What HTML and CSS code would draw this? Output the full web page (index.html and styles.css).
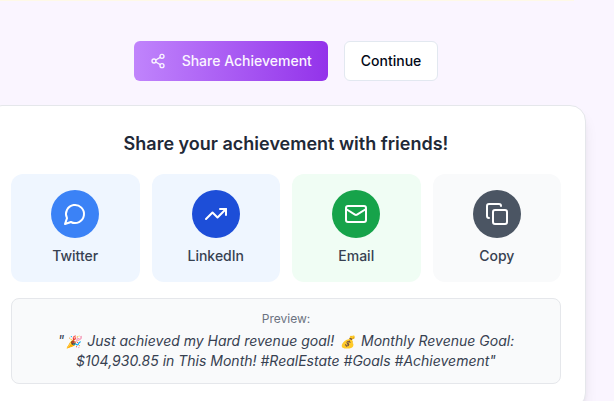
FILE: index.html
```html
<!DOCTYPE html>
<html lang="en">
<head>
<meta charset="utf-8">
<title>Share Achievement</title>
<link rel="stylesheet" href="styles.css">
</head>
<body>
<main class="page">
  <div class="banner-edge"></div>
  <div class="actions">
    <button class="btn btn-primary" type="button">
      <svg class="icon-sm" viewBox="0 0 24 24" aria-hidden="true"><circle cx="18" cy="5" r="3"/><circle cx="6" cy="12" r="3"/><circle cx="18" cy="19" r="3"/><path d="M8.59 13.51l6.83 3.98M15.41 6.51l-6.82 3.98"/></svg>
      <span>Share Achievement</span>
    </button>
    <button class="btn btn-outline" type="button">Continue</button>
  </div>
  <section class="card">
    <h2 class="card-title">Share your achievement with friends!</h2>
    <div class="channels">
      <button class="channel channel-twitter" type="button">
        <span class="disc"><svg class="icon" viewBox="0 0 24 24" aria-hidden="true"><path d="M7.9 20A9 9 0 1 0 4 16.1L2 22Z"/></svg></span>
        <span>Twitter</span>
      </button>
      <button class="channel channel-linkedin" type="button">
        <span class="disc"><svg class="icon" viewBox="0 0 24 24" aria-hidden="true"><path d="M22 7 13.5 15.5 8.5 10.5 2 17"/><path d="M16 7h6v6"/></svg></span>
        <span>LinkedIn</span>
      </button>
      <button class="channel channel-email" type="button">
        <span class="disc"><svg class="icon" viewBox="0 0 24 24" aria-hidden="true"><rect x="2" y="4" width="20" height="16" rx="2"/><path d="m22 7-8.97 5.7a1.94 1.94 0 0 1-2.06 0L2 7"/></svg></span>
        <span>Email</span>
      </button>
      <button class="channel channel-copy" type="button">
        <span class="disc"><svg class="icon" viewBox="0 0 24 24" aria-hidden="true"><rect x="8" y="8" width="14" height="14" rx="2"/><path d="M4 16c-1.1 0-2-.9-2-2V4c0-1.1.9-2 2-2h10c1.1 0 2 .9 2 2"/></svg></span>
        <span>Copy</span>
      </button>
    </div>
    <div class="preview">
      <p class="preview-label">Preview:</p>
      <p class="preview-text">"<span class="emoji">🎉</span> Just achieved my Hard revenue goal! <span class="emoji">💰</span> Monthly Revenue Goal: $104,930.85 in This Month! #RealEstate #Goals #Achievement"</p>
    </div>
  </section>
</main>
</body>
</html>
```
FILE: styles.css
```css
* {
  box-sizing: border-box;
}

body {
  margin: 0;
  height: 100vh;
  overflow: hidden;
  background: #faf5ff;
  color: #1f2937;
  font-family: Inter, "Liberation Sans", sans-serif;
  font-size: 14px;
  line-height: 20px;
}

h2,
p {
  margin: 0;
}

button {
  font: inherit;
  font-weight: 500;
  cursor: pointer;
}

svg {
  fill: none;
  stroke: currentColor;
  stroke-width: 2;
  stroke-linecap: round;
  stroke-linejoin: round;
}

.page {
  margin: 0 28px 0 -14px;
}

.banner-edge {
  height: 1px;
  margin-right: 12px;
  background: #fef9e7;
}

.actions {
  display: flex;
  justify-content: center;
  gap: 16px;
  margin: 40px 0 24px;
}

.btn {
  display: flex;
  align-items: center;
  height: 40px;
  padding: 0 16px;
  border: 0;
  border-radius: 6px;
}

.btn-primary {
  gap: 16px;
  background: linear-gradient(to right, #c084fc, #9333ea);
  color: #faf5ff;
}

.btn-outline {
  border: 1px solid #e2e8f0;
  background: #fff;
  color: #020817;
}

.icon-sm {
  width: 16px;
  height: 16px;
}

.icon {
  width: 24px;
  height: 24px;
}

.card {
  padding: 24px;
  border: 1px solid #e5e7eb;
  border-radius: 16px;
  background: #fff;
  box-shadow: 0 10px 15px -3px rgba(0, 0, 0, 0.1), 0 4px 6px -4px rgba(0, 0, 0, 0.1);
  text-align: center;
}

.card-title {
  margin-bottom: 16px;
  font-size: 18px;
  font-weight: 600;
  line-height: 28px;
}

.channels {
  display: grid;
  grid-template-columns: repeat(4, 1fr);
  gap: 12px;
  margin-bottom: 16px;
}

.channel {
  display: flex;
  flex-direction: column;
  align-items: center;
  gap: 8px;
  padding: 16px;
  border: 0;
  border-radius: 12px;
  color: #374151;
}

.disc {
  display: flex;
  align-items: center;
  justify-content: center;
  width: 48px;
  height: 48px;
  border-radius: 50%;
  color: #fff;
}

.channel-twitter,
.channel-linkedin {
  background: #eff6ff;
}

.channel-email {
  background: #f0fdf4;
}

.channel-copy {
  background: #f9fafb;
}

.channel-twitter .disc {
  background: #3b82f6;
}

.channel-linkedin .disc {
  background: #1d4ed8;
}

.channel-email .disc {
  background: #16a34a;
}

.channel-copy .disc {
  background: #4b5563;
}

.preview {
  padding: 12px;
  border: 1px solid #e5e7eb;
  border-radius: 8px;
  background: #f9fafb;
}

.preview-label {
  margin-bottom: 4px;
  color: #6b7280;
  font-size: 12px;
  line-height: 16px;
}

.preview-text {
  color: #374151;
  font-style: italic;
}

.emoji {
  margin: 0 2px;
  font-size: 12px;
  line-height: 1;
}
```
